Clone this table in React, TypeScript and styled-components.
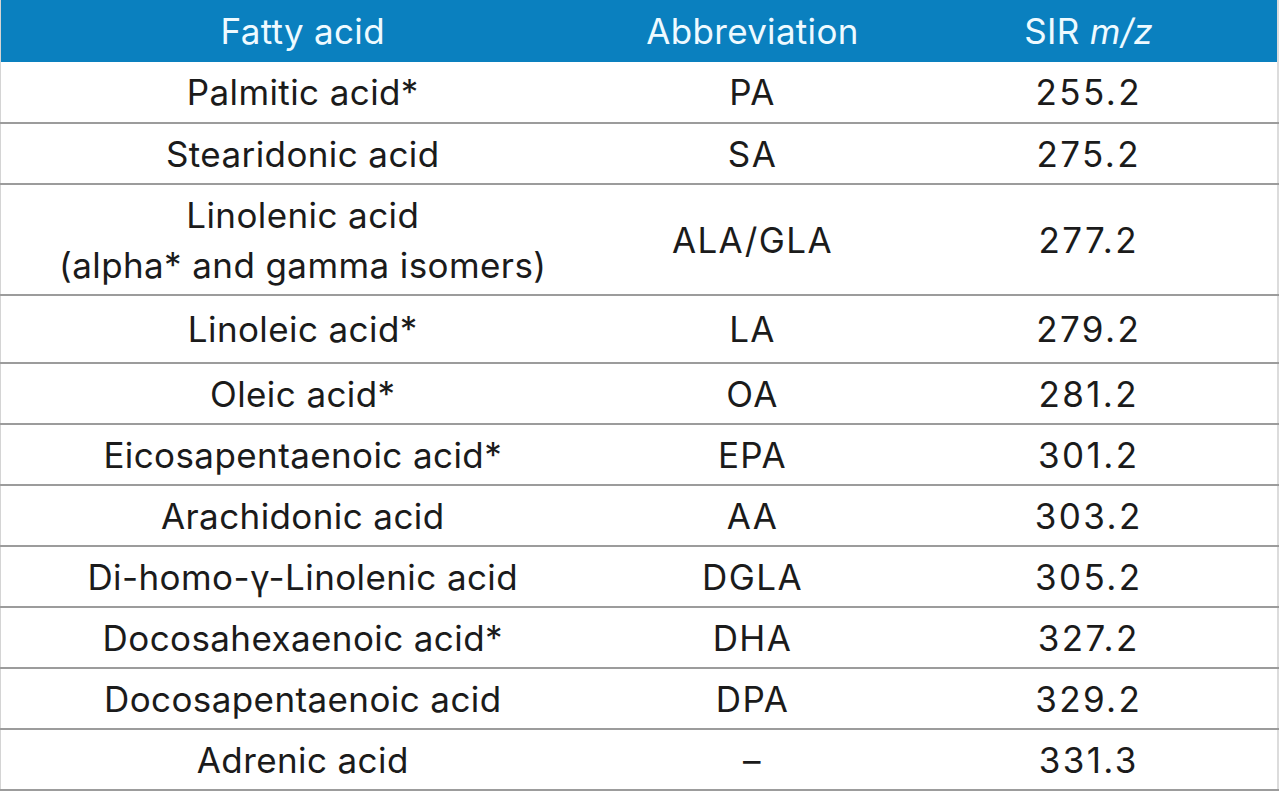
import React from "react";
import styled, { createGlobalStyle } from "styled-components";

const GlobalStyle = createGlobalStyle`
  html, body {
    margin: 0;
    padding: 0;
    background: #ffffff;
  }
  body {
    font-family: Inter, "Liberation Sans", Arial, sans-serif;
  }
`;

const Table = styled.table`
  width: 1279px;
  border-collapse: collapse;
  table-layout: fixed;
  border-left: 1px solid #d4d4d4;
  border-right: 2px solid #dcdcdc;
  color: #1b1b1b;
`;

const HeadRow = styled.tr`
  height: 62px;
  background-color: #0a80bf;
`;

const HeadCell = styled.th`
  padding: 0;
  font-size: 35px;
  font-weight: 400;
  color: #eefaff;
  text-align: center;
  vertical-align: middle;
  letter-spacing: 0.3px;
  i {
    font-style: italic;
  }
`;

const Row = styled.tr<{ $h: number }>`
  height: ${(p) => p.$h}px;
  border-bottom: 2px solid #9c9c9c;
`;

const Cell = styled.td<{ $spacing?: number }>`
  padding: 0;
  font-size: 35px;
  line-height: 50px;
  text-align: center;
  vertical-align: middle;
  letter-spacing: ${(p) => p.$spacing ?? 0}px;
`;

const rows = [
  { name: ["Palmitic acid*"], abbr: "PA", mz: "255.2", h: 61 },
  { name: ["Stearidonic acid"], abbr: "SA", mz: "275.2", h: 61 },
  {
    name: ["Linolenic acid", "(alpha* and gamma isomers)"],
    abbr: "ALA/GLA",
    mz: "277.2",
    h: 111,
  },
  { name: ["Linoleic acid*"], abbr: "LA", mz: "279.2", h: 68 },
  { name: ["Oleic acid*"], abbr: "OA", mz: "281.2", h: 61 },
  { name: ["Eicosapentaenoic acid*"], abbr: "EPA", mz: "301.2", h: 61 },
  { name: ["Arachidonic acid"], abbr: "AA", mz: "303.2", h: 61 },
  { name: ["Di-homo-γ-Linolenic acid"], abbr: "DGLA", mz: "305.2", h: 61 },
  { name: ["Docosahexaenoic acid*"], abbr: "DHA", mz: "327.2", h: 61 },
  { name: ["Docosapentaenoic acid"], abbr: "DPA", mz: "329.2", h: 61 },
  { name: ["Adrenic acid"], abbr: "–", mz: "331.3", h: 61 },
];

const App = () => {
  return (
    <>
      <GlobalStyle />
      <Table>
        <colgroup>
          <col style={{ width: 604 }} />
          <col style={{ width: 296 }} />
          <col />
        </colgroup>
        <thead>
          <HeadRow>
            <HeadCell>Fatty acid</HeadCell>
            <HeadCell>Abbreviation</HeadCell>
            <HeadCell>
              SIR <i>m/z</i>
            </HeadCell>
          </HeadRow>
        </thead>
        <tbody>
          {rows.map((r) => (
            <Row key={r.abbr + r.mz} $h={r.h}>
              <Cell $spacing={0.4}>
                {r.name.map((line, i) => (
                  <div key={i}>{line}</div>
                ))}
              </Cell>
              <Cell $spacing={1.4}>{r.abbr}</Cell>
              <Cell $spacing={2.4}>{r.mz}</Cell>
            </Row>
          ))}
        </tbody>
      </Table>
    </>
  );
};

export default App;
